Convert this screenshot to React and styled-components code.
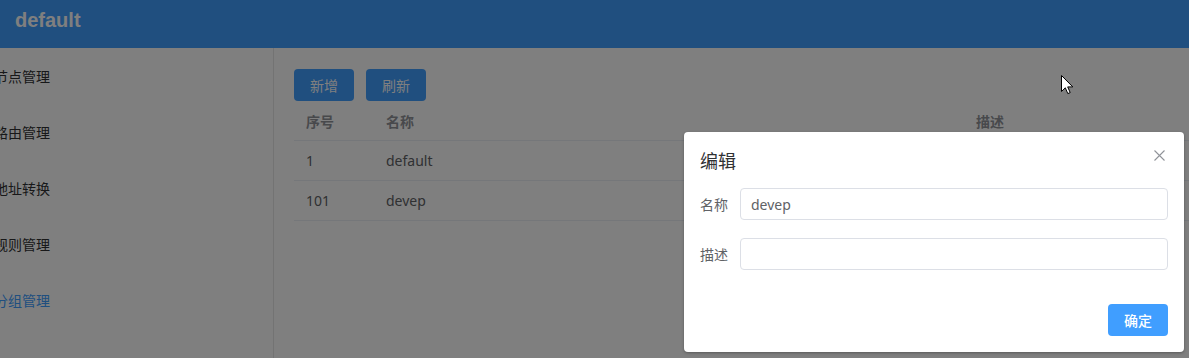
import React from 'react'
import styled, { createGlobalStyle } from 'styled-components'

const GlobalStyle = createGlobalStyle`
  html, body {
    margin: 0;
    padding: 0;
    overflow: hidden;
  }
  body {
    font-family: "Noto Sans", "Noto Sans CJK SC", sans-serif;
    font-size: 14px;
    color: #303133;
    background: #fff;
  }
  * {
    box-sizing: border-box;
  }
`

const Page = styled.div`
  position: relative;
  width: 1189px;
  height: 358px;
  display: flex;
  flex-direction: column;
  overflow: hidden;
`

const Header = styled.header`
  height: 48px;
  flex-shrink: 0;
  background: #409eff;
  color: #fff;
  padding: 8px 15px 0;
  font-family: "Liberation Sans", Arial, sans-serif;
  font-size: 20px;
  font-weight: bold;
  line-height: 24px;
`

const Body = styled.div`
  flex: 1;
  display: flex;
  min-height: 0;
`

const Sidebar = styled.nav`
  width: 274px;
  flex-shrink: 0;
  border-right: 1px solid #e6e6e6;
  display: flex;
  flex-direction: column;
`

const MenuItem = styled.div`
  height: 56px;
  line-height: 56px;
  font-family: "Noto Sans CJK SC", sans-serif;
  font-size: 14px;
  color: ${p => (p.$active ? '#409eff' : '#303133')};
  overflow: hidden;
  white-space: nowrap;
  span {
    display: inline-block;
    margin-left: -6px;
  }
`

const Main = styled.main`
  flex: 1;
  padding: 21px 0 0 20px;
  overflow: hidden;
`

const Toolbar = styled.div`
  display: flex;
  gap: 12px;
`

const Button = styled.button`
  height: 32px;
  padding: 0 16px;
  border: none;
  border-radius: 4px;
  background: #409eff;
  color: #fff;
  font-family: "Noto Sans CJK SC", sans-serif;
  font-size: 14px;
  font-weight: ${p => (p.$bold ? 500 : 400)};
  line-height: 32px;
  cursor: pointer;
`

const Table = styled.div`
  width: 100%;
`

const Row = styled.div`
  display: grid;
  grid-template-columns: 80px 590px 1fr;
  height: 40px;
  align-items: center;
  border-bottom: 1px solid #ebeef5;
  color: ${p => (p.$head ? '#909399' : '#606266')};
  font-weight: ${p => (p.$head ? 'bold' : 'normal')};
  font-family: "Noto Sans", "Noto Sans CJK SC", sans-serif;
`

const Cell = styled.div`
  padding: 0 12px;
  white-space: nowrap;
`

const Overlay = styled.div`
  position: absolute;
  inset: 0;
  background: rgba(0, 0, 0, 0.5);
`

const Dialog = styled.div`
  position: absolute;
  left: 684px;
  top: 132px;
  width: 500px;
  background: #fff;
  border-radius: 4px;
  box-shadow: 0 1px 3px rgba(0, 0, 0, 0.3);
`

const DialogHeader = styled.div`
  position: relative;
  padding: 16px 20px 10px 16px;
`

const DialogTitle = styled.span`
  font-family: "Noto Sans CJK SC", sans-serif;
  font-size: 18px;
  line-height: 24px;
  color: #303133;
`

const CloseButton = styled.button`
  position: absolute;
  top: 16px;
  right: 18px;
  width: 14px;
  height: 14px;
  padding: 0;
  border: none;
  background: none;
  display: flex;
  align-items: center;
  justify-content: center;
  cursor: pointer;
`

const DialogBody = styled.div`
  padding: 6px 16px 0;
  display: flex;
  flex-direction: column;
  gap: 18px;
`

const FormItem = styled.div`
  display: flex;
  align-items: center;
  height: 32px;
`

const Label = styled.label`
  width: 40px;
  flex-shrink: 0;
  font-family: "Noto Sans CJK SC", sans-serif;
  font-size: 14px;
  color: #606266;
`

const Input = styled.input`
  flex: 1;
  height: 32px;
  border: 1px solid #dcdfe6;
  border-radius: 4px;
  padding: 0 10px;
  font-family: "Noto Sans", "Noto Sans CJK SC", sans-serif;
  font-size: 14px;
  color: #606266;
  outline: none;
`

const DialogFooter = styled.div`
  display: flex;
  justify-content: flex-end;
  padding: 34px 16px 16px;
`

const Cursor = styled.svg`
  position: absolute;
  left: 1061px;
  top: 75px;
`

const menu = ['节点管理', '路由管理', '地址转换', '规则管理', '分组管理']

const rows = [
  { id: '1', name: 'default', desc: '' },
  { id: '101', name: 'devep', desc: '' },
]

const App = () => {
  return (
    <Page>
      <GlobalStyle />
      <Header>default</Header>
      <Body>
        <Sidebar>
          {menu.map((m, i) => (
            <MenuItem key={m} $active={i === 4}>
              <span>{m}</span>
            </MenuItem>
          ))}
        </Sidebar>
        <Main>
          <Toolbar>
            <Button>新增</Button>
            <Button>刷新</Button>
          </Toolbar>
          <Table>
            <Row $head>
              <Cell>序号</Cell>
              <Cell>名称</Cell>
              <Cell>描述</Cell>
            </Row>
            {rows.map(r => (
              <Row key={r.id}>
                <Cell>{r.id}</Cell>
                <Cell>{r.name}</Cell>
                <Cell>{r.desc}</Cell>
              </Row>
            ))}
          </Table>
        </Main>
      </Body>
      <Overlay />
      <Dialog>
        <DialogHeader>
          <DialogTitle>编辑</DialogTitle>
          <CloseButton aria-label="关闭">
            <svg width="11" height="11" viewBox="0 0 11 11">
              <path d="M0.5 0.5 L10.5 10.5 M10.5 0.5 L0.5 10.5" stroke="#909399" strokeWidth="1.1" fill="none" />
            </svg>
          </CloseButton>
        </DialogHeader>
        <DialogBody>
          <FormItem>
            <Label>名称</Label>
            <Input defaultValue="devep" />
          </FormItem>
          <FormItem>
            <Label>描述</Label>
            <Input defaultValue="" />
          </FormItem>
        </DialogBody>
        <DialogFooter>
          <Button $bold>确定</Button>
        </DialogFooter>
      </Dialog>
      <Cursor width="13" height="20" viewBox="0 0 13 20">
        <path d="M0.5 0.5 L0.5 16.5 L4.3 12.8 L6.8 18.6 L9.2 17.6 L6.7 11.9 L11.8 11.9 Z" fill="#fff" stroke="#000" strokeWidth="1" strokeLinejoin="miter" />
      </Cursor>
    </Page>
  )
}

export default App
